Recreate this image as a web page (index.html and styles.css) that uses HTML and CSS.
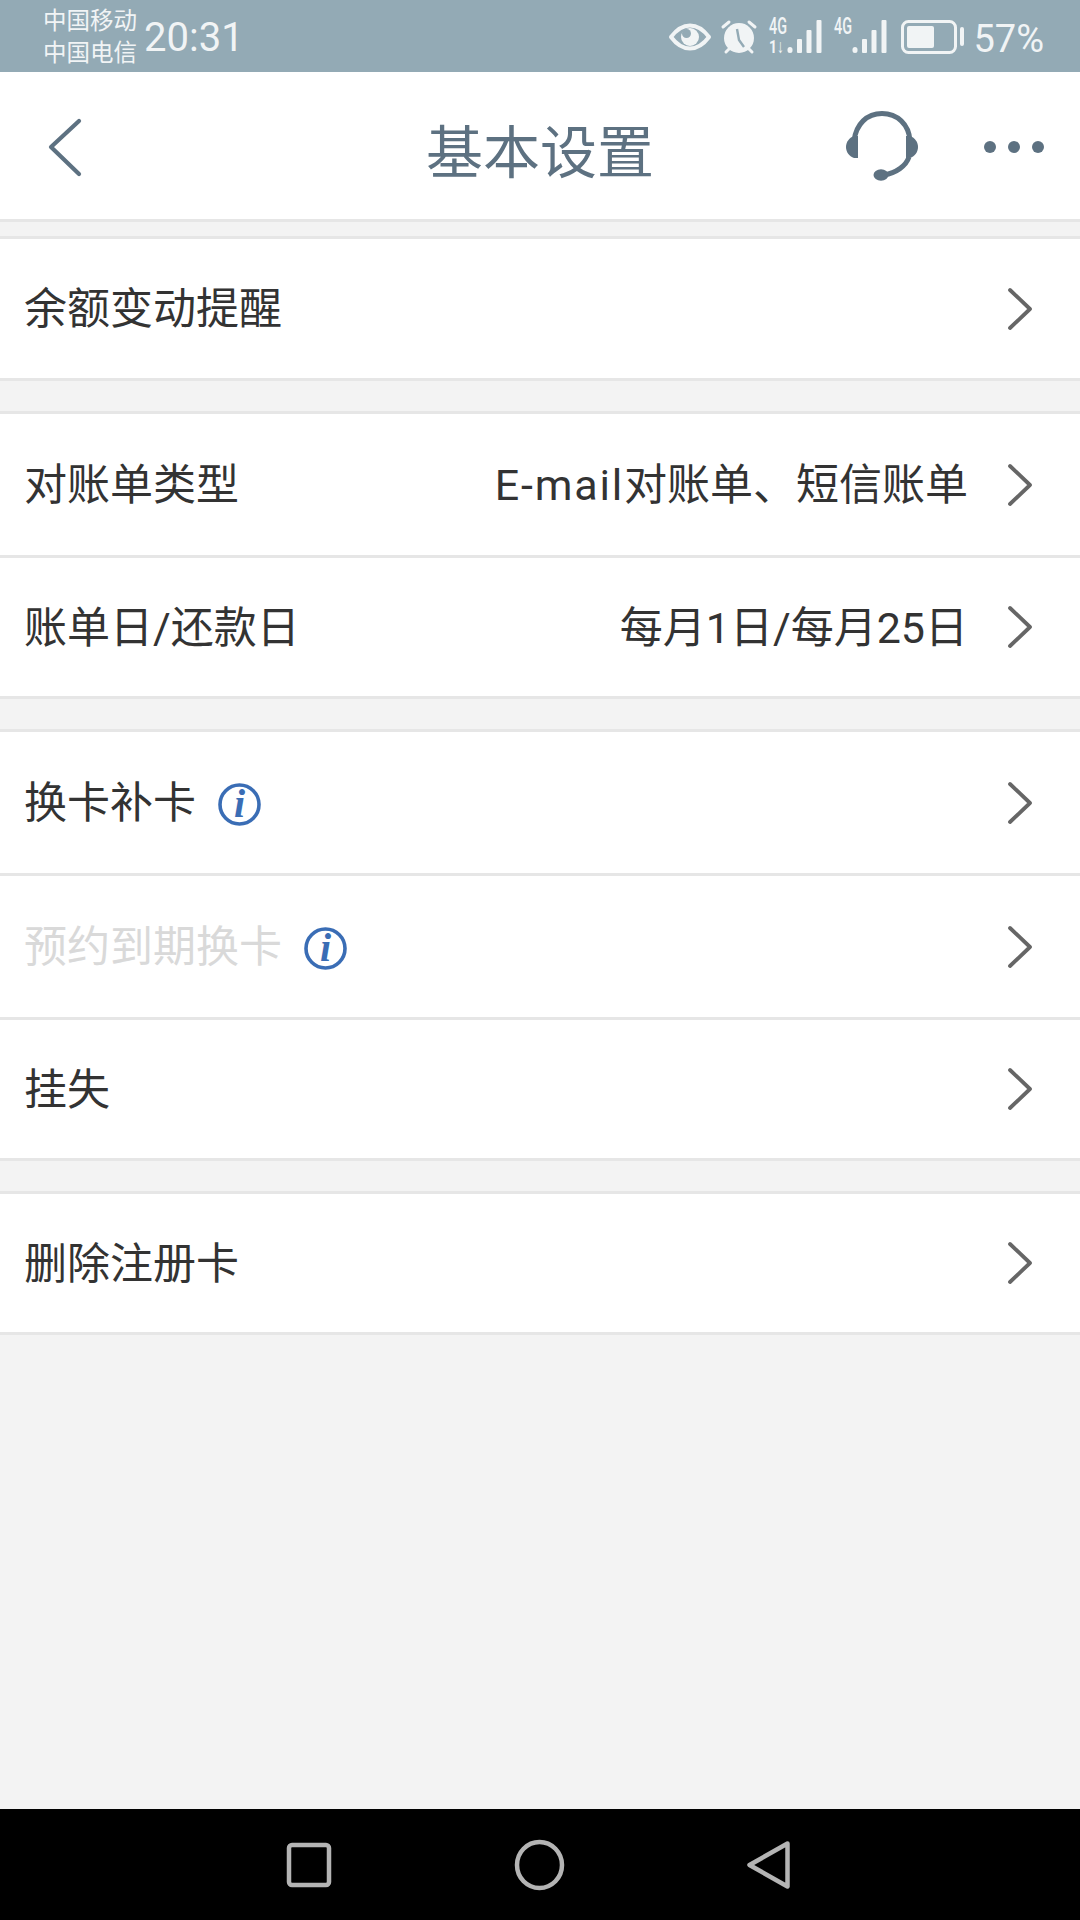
FILE: index.html
```html
<!DOCTYPE html>
<html lang="zh-CN">
<head>
<meta charset="utf-8">
<title>基本设置</title>
<link rel="stylesheet" href="styles.css">
</head>
<body>
<div class="screen">
  <div class="status">
    <div class="carriers"><span>中国移动</span><span>中国电信</span></div>
    <div class="time">20:31</div>
    <div class="status-right">
      <svg class="ic-eye" viewBox="0 0 42 28"><path d="M2 14C8 6 14 2.500 21 2.500S34 6 40 14c-6 8-12 11.500-19 11.500S8 22 2 14z" fill="none" stroke="#f1f4f5" stroke-width="4" stroke-linejoin="round"/><circle cx="21" cy="14" r="9" fill="#f1f4f5"/><circle cx="17.500" cy="10.500" r="4.500" fill="#93aab5"/></svg>
      <svg class="ic-alarm" viewBox="0 0 36 34"><circle cx="18" cy="18" r="15" fill="#f1f4f5"/><path d="M2 7l6-5M34 7l-6-5M5 32l3-3M31 32l-3-3" stroke="#f1f4f5" stroke-width="3" stroke-linecap="round"/><path d="M16 9l2 11 5 7" fill="none" stroke="#93aab5" stroke-width="2.400"/></svg>
      <svg class="ic-sig1" viewBox="0 0 54 36"><text class="sig-text" x="0" y="15" textLength="18" lengthAdjust="spacingAndGlyphs">4G</text><text class="sig-text small" x="0" y="34" textLength="15" lengthAdjust="spacingAndGlyphs">1↓</text><g fill="#f1f4f5"><rect x="18.500" y="28" width="5" height="6" rx="2.500"/><rect x="28" y="20" width="5" height="14" rx="1"/><rect x="37.500" y="11" width="5" height="23" rx="1"/><rect x="47.500" y="1" width="5" height="33" rx="1"/></g></svg>
      <svg class="ic-sig2" viewBox="0 0 54 36"><text class="sig-text" x="0" y="15" textLength="18" lengthAdjust="spacingAndGlyphs">4G</text><g fill="#f1f4f5"><rect x="18.500" y="28" width="5" height="6" rx="2.500"/><rect x="28" y="20" width="5" height="14" rx="1"/><rect x="37.500" y="11" width="5" height="23" rx="1"/><rect x="47.500" y="1" width="5" height="33" rx="1"/></g></svg>
      <svg class="ic-batt" viewBox="0 0 64 34"><rect x="1.500" y="1.500" width="53" height="31" rx="6" fill="none" stroke="#f1f4f5" stroke-width="3"/><rect x="6" y="6" width="27" height="22" rx="2" fill="#f1f4f5"/><rect x="59" y="7" width="4" height="19" rx="2" fill="#f1f4f5"/></svg>
      <span class="pct">57%</span>
    </div>
  </div>

  <header class="nav">
    <div class="nav-left">
      <svg class="ic-back" viewBox="0 0 34 58"><path d="M31 2L3 28l28 27" fill="none" stroke="#5d7181" stroke-width="4.200" stroke-linecap="round" stroke-linejoin="round"/></svg>
    </div>
    <h1 class="nav-title">基本设置</h1>
    <div class="nav-right">
      <svg class="ic-headset" viewBox="0 0 72 72"><path d="M8 30C10 13 21 2.500 36 2.500S63 13 64 30M63 46C60 55 50 62 38 64" fill="none" stroke="#5d7181" stroke-width="5"/><path d="M12 25v22H8c-5-2-8-6-8-11s3-9 8-11z" fill="#5d7181"/><path d="M60 25v22h4c5-2 8-6 8-11s-3-9-8-11z" fill="#5d7181"/><ellipse cx="35" cy="64" rx="7.500" ry="5.800" fill="#5d7181"/></svg>
      <div class="dots"><i></i><i></i><i></i></div>
    </div>
  </header>

  <main class="list">
    <section class="group first">
      <div class="row row-139"><span class="label">余额变动提醒</span><svg class="chev" viewBox="0 0 24 42"><path d="M2 2l20 19L2 40" /></svg></div>
    </section>
    <section class="group">
      <div class="row row-141"><span class="label">对账单类型</span><span class="value"><span class="latin">E-mail</span>对账单、短信账单</span><svg class="chev" viewBox="0 0 24 42"><path d="M2 2l20 19L2 40" /></svg></div>
      <div class="row row-138"><span class="label">账单日/还款日</span><span class="value">每月1日/每月25日</span><svg class="chev" viewBox="0 0 24 42"><path d="M2 2l20 19L2 40" /></svg></div>
    </section>
    <section class="group">
      <div class="row row-141"><span class="label">换卡补卡</span>
        <svg class="info" viewBox="0 0 43 43"><circle cx="21.500" cy="21.500" r="19.500" /><text x="21.500" y="34" class="info-i">i</text></svg>
        <svg class="chev" viewBox="0 0 24 42"><path d="M2 2l20 19L2 40" /></svg></div>
      <div class="row row-141"><span class="label muted">预约到期换卡</span>
        <svg class="info" viewBox="0 0 43 43"><circle cx="21.500" cy="21.500" r="19.500" /><text x="21.500" y="34" class="info-i">i</text></svg>
        <svg class="chev" viewBox="0 0 24 42"><path d="M2 2l20 19L2 40" /></svg></div>
      <div class="row row-138"><span class="label">挂失</span><svg class="chev" viewBox="0 0 24 42"><path d="M2 2l20 19L2 40" /></svg></div>
    </section>
    <section class="group">
      <div class="row row-138"><span class="label">删除注册卡</span><svg class="chev" viewBox="0 0 24 42"><path d="M2 2l20 19L2 40" /></svg></div>
    </section>
  </main>

  <footer class="softkeys">
    <svg class="key-square" viewBox="0 0 44 44"><rect x="2" y="2" width="40" height="40" rx="3" /></svg>
    <svg class="key-circle" viewBox="0 0 49 50"><ellipse cx="24.500" cy="25" rx="22.500" ry="23" /></svg>
    <svg class="key-back" viewBox="0 0 43 48"><path d="M40.500 2.500L2.500 24l38 21.500z" /></svg>
  </footer>
</div>
</body>
</html>
```
FILE: styles.css
```css
* { box-sizing: border-box; }
html, body { margin: 0; padding: 0; }
body { font-family: Roboto, "Noto Sans CJK SC", sans-serif; background: #f3f3f3; }
svg { overflow: visible; }

.screen { width: 1080px; height: 1920px; display: flex; flex-direction: column; overflow: hidden; }

.status {
  height: 72px; flex: none; background: #93aab5; color: #f1f4f5;
  display: flex; align-items: center; padding: 0 36px 0 43px;
}
.carriers { display: flex; flex-direction: column; font-size: 23.5px; line-height: 32px; padding-top: 2px; }
.carriers span { display: block; }
.time { font-size: 40px; line-height: 72px; margin-left: 7px; padding-top: 3px; }
.status-right { margin-left: auto; display: flex; align-items: center; padding-top: 2px; }
.ic-eye { width: 42px; height: 28px; margin-right: 10px; }
.ic-alarm { width: 36px; height: 34px; margin-right: 12px; }
.ic-sig1, .ic-sig2 { width: 54px; height: 36px; }
.ic-sig2 { margin-left: 11px; }
.ic-batt { width: 64px; height: 34px; margin-left: 13px; }
.sig-text { font-family: Roboto, sans-serif; font-size: 24px; font-weight: 500; fill: #f1f4f5; }
.sig-text.small { font-size: 19px; font-weight: 700; }
.pct { font-size: 38px; line-height: 72px; margin-left: 8px; padding-top: 3px; }

.nav {
  height: 150px; flex: none; background: #fff; border-bottom: 3px solid #e6e6e6;
  display: grid; grid-template-columns: 1fr auto 1fr; align-items: center; padding: 0 36px;
}
.nav-left { display: flex; padding-left: 12px; padding-top: 4px; }
.ic-back { width: 34px; height: 58px; }
.nav-title { margin: 0; font-size: 57px; font-weight: 400; line-height: 80px; color: #5d7181; padding-top: 17px; }
.nav-right { display: flex; justify-content: flex-end; align-items: center; padding-top: 2px; }
.ic-headset { width: 72px; height: 72px; margin-right: 66px; }
.dots { display: flex; gap: 12px; }
.dots i { width: 12px; height: 12px; border-radius: 50%; background: #5d7181; display: block; }

.list { flex: 1; display: flex; flex-direction: column; gap: 30px; padding-top: 14px; }
.group { background: #fff; border-top: 3px solid #e6e6e6; border-bottom: 3px solid #e6e6e6; }
.row { display: flex; align-items: center; padding: 0 48px 0 24px; }
.row + .row { border-top: 3px solid #e6e6e6; }
.row-139 { height: 139px; }
.row-141 { height: 141px; }
.row-138 { height: 138px; }
.row + .row-141 { height: 144px; }
.row + .row-138 { height: 141px; }
.label { font-size: 43px; line-height: 60px; color: #333; padding-top: 1px; }
.label.muted { color: #d9d9d9; }
.value { margin-left: auto; margin-right: 40px; font-size: 43px; line-height: 60px; color: #333; padding-top: 1px; }
.latin { letter-spacing: 1.8px; }
.chev { width: 24px; height: 42px; margin-left: auto; flex: none; fill: none; stroke: #666; stroke-width: 3.8; stroke-linecap: round; stroke-linejoin: round; }
.value + .chev { margin-left: 0; }
.info { width: 43px; height: 43px; margin-left: 22px; margin-top: 3px; fill: none; stroke: #3a6db5; stroke-width: 3.6; }
.info-i { font-family: "Liberation Serif", serif; font-style: italic; font-weight: 700; font-size: 40px; text-anchor: middle; fill: #3a6db5; stroke: none; }

.softkeys { height: 111px; flex: none; background: #000; display: flex; align-items: center; padding-left: 287px; }
.softkeys svg { fill: none; stroke: #b4b4b4; stroke-width: 4.5; stroke-linejoin: round; flex: none; }
.key-square { width: 44px; height: 44px; }
.key-circle { width: 49px; height: 50px; margin-left: 184px; }
.key-back { width: 43px; height: 48px; margin-left: 183px; }
```
